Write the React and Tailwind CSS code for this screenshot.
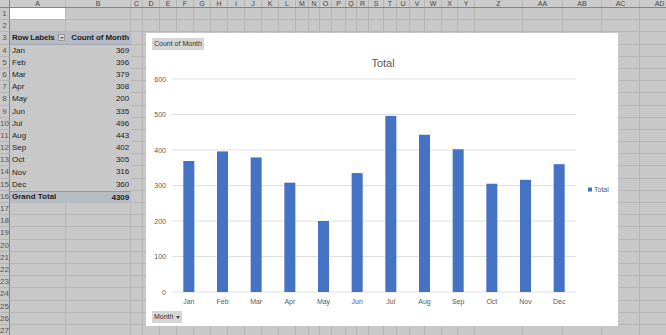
import React from 'react';

const COLS = [
  ['A', 56], ['B', 65], ['C', 12], ['D', 17], ['E', 17], ['F', 17], ['G', 17], ['H', 17],
  ['I', 17], ['J', 17], ['K', 17], ['L', 17], ['M', 13], ['N', 11], ['O', 12], ['P', 14],
  ['Q', 11], ['R', 12], ['S', 15], ['T', 13], ['U', 13], ['V', 15], ['W', 17], ['X', 16],
  ['Y', 17], ['Z', 48], ['AA', 40], ['AB', 39], ['AC', 38], ['AD', 40],
];

const DATA = [
  ['Jan', 369], ['Feb', 396], ['Mar', 379], ['Apr', 308], ['May', 200], ['Jun', 335],
  ['Jul', 496], ['Aug', 443], ['Sep', 402], ['Oct', 305], ['Nov', 316], ['Dec', 360],
];

const font = { fontFamily: '"Liberation Sans", Arial, sans-serif' };

function Row({ n }) {
  const pivotRow = n >= 3 && n <= 16;
  const band = n === 3 || n === 16;
  const item = DATA[n - 4];
  return (
    <div className="flex h-[12.2px] shrink-0">
      <div className="w-[10px] shrink-0 border-r border-[#5f9a78] border-b border-b-[#b5b5b5] text-[8px] leading-[12px] text-[#555] text-center overflow-hidden">
        {n}
      </div>
      {pivotRow ? (
        <div
          className={`flex w-[121px] shrink-0 text-[8px] leading-[12px] text-[#1e1e1e] ${
            band ? 'bg-[#b7bbc4] font-bold' : 'bg-[#c8c8c8]'
          } ${n === 16 ? 'border-t border-[#8f97a8]' : ''} ${n === 3 ? 'border-b border-[#9ea5b3]' : ''}`}
        >
          <div className="w-[56px] pl-[2px] flex items-center justify-between pr-[1px]">
            {n === 3 && (
              <>
                <span className="whitespace-nowrap tracking-[-0.2px]">Row Labels</span>
                <span className="w-[7px] h-[7px] bg-[#d8d8d8] border border-[#9a9a9a] flex items-center justify-center">
                  <span className="border-l-[2px] border-r-[2px] border-t-[2px] border-l-transparent border-r-transparent border-t-[#555]" />
                </span>
              </>
            )}
            {item && <span>{item[0]}</span>}
            {n === 16 && <span className="whitespace-nowrap">Grand Total</span>}
          </div>
          <div className="w-[65px] pr-[2px] text-right whitespace-nowrap tracking-[-0.1px]">
            {n === 3 && 'Count of Month'}
            {item && item[1]}
            {n === 16 && '4309'}
          </div>
        </div>
      ) : (
        COLS.slice(0, 2).map(([c, w]) => (
          <div
            key={c}
            style={{ width: w }}
            className={`shrink-0 border-r border-b border-[#b5b5b5] ${
              n === 1 && c === 'A' ? 'bg-white border-[#8a8a8a]' : ''
            }`}
          />
        ))
      )}
      {COLS.slice(2).map(([c, w]) => (
        <div key={c} style={{ width: w }} className="shrink-0 border-r border-b border-[#b5b5b5]" />
      ))}
    </div>
  );
}

function Chart() {
  const top = 46;
  const base = 259;
  const scale = (base - top) / 600;
  const left = 26;
  const right = 430;
  const step = (right - left) / 12;
  return (
    <div className="absolute left-[146px] top-[33px] w-[472px] h-[293px] bg-white">
      <div className="absolute left-[6px] top-[5px] px-[2px] h-[12px] bg-[#d6d6d6] text-[7px] leading-[12px] text-[#333]">
        Count of Month
      </div>
      <svg width="472" height="293" className="block">
        <text x="237" y="34" textAnchor="middle" fontSize="11" fill="#595959" style={font}>
          Total
        </text>
        {[0, 100, 200, 300, 400, 500, 600].map((v) => {
          const y = base - v * scale;
          return (
            <g key={v}>
              <line x1={left} x2={right} y1={y} y2={y} stroke="#e0e0e0" strokeWidth="1" />
              <text x="20" y={y + 2.5} textAnchor="end" fontSize="7" fill="#595959" style={font}>
                {v}
              </text>
            </g>
          );
        })}
        {DATA.map(([m, v], i) => {
          const cx = left + step * (i + 0.5);
          const h = v * scale;
          return (
            <g key={m}>
              <rect x={cx - 5.5} y={base - h} width="11" height={h} fill="#4472c4" />
              <text x={cx} y="271" textAnchor="middle" fontSize="7" fill="#595959" style={font}>
                {m}
              </text>
            </g>
          );
        })}
        <rect x="442" y="154.5" width="4" height="4" fill="#4472c4" />
        <text x="448" y="159" fontSize="7" fill="#595959" style={font}>
          Total
        </text>
      </svg>
      <div className="absolute left-[6px] top-[278px] h-[12px] px-[2px] bg-[#d6d6d6] text-[7px] leading-[12px] text-[#333] flex items-center gap-[3px]">
        <span>Month</span>
        <span className="border-l-[2px] border-r-[2px] border-t-[3px] border-l-transparent border-r-transparent border-t-[#444]" />
      </div>
    </div>
  );
}

export default function App() {
  return (
    <div className="relative w-[666px] h-[335px] overflow-hidden bg-[#c8c8c8]" style={font}>
      <div className="flex h-[8px] border-b border-[#5f9a78] bg-[#cbcbcb]">
        <div className="w-[10px] shrink-0 border-r border-[#5f9a78]" />
        {COLS.map(([c, w]) => (
          <div
            key={c}
            style={{ width: w }}
            className="shrink-0 border-r border-[#b5b5b5] overflow-hidden text-center text-[7px] leading-[7px] text-[#444]"
          >
            {c}
          </div>
        ))}
      </div>
      <div className="flex flex-col">
        {Array.from({ length: 27 }, (_, i) => (
          <Row key={i} n={i + 1} />
        ))}
      </div>
      <Chart />
    </div>
  );
}
